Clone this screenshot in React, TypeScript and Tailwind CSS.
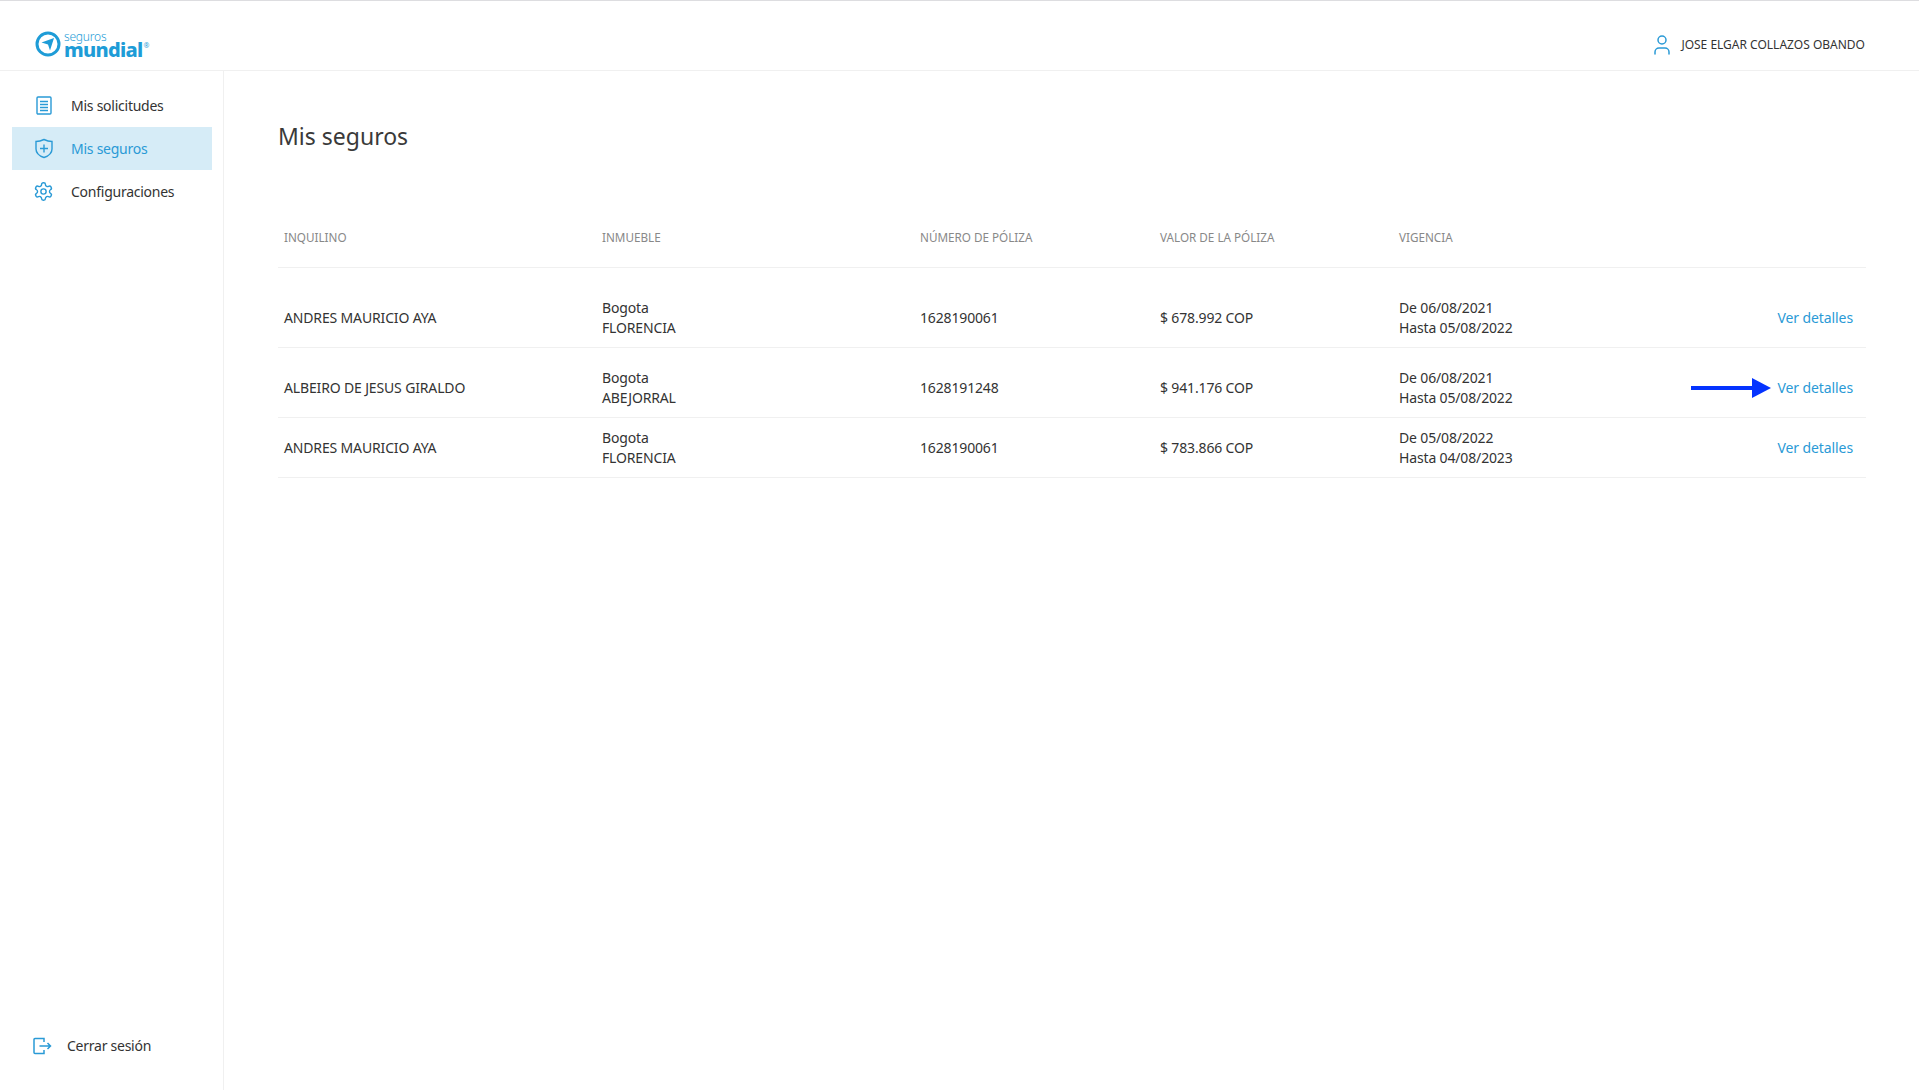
import { User } from 'lucide-react';

const rows = [
  { name: 'ANDRES MAURICIO AYA', city: 'FLORENCIA', poliza: '1628190061', valor: '$ 678.992 COP', desde: 'De 06/08/2021', hasta: 'Hasta 05/08/2022', cls: 'h-[60px] mt-5', arrow: false },
  { name: 'ALBEIRO DE JESUS GIRALDO', city: 'ABEJORRAL', poliza: '1628191248', valor: '$ 941.176 COP', desde: 'De 06/08/2021', hasta: 'Hasta 05/08/2022', cls: 'h-[70px] pt-[10px]', arrow: true },
  { name: 'ANDRES MAURICIO AYA', city: 'FLORENCIA', poliza: '1628190061', valor: '$ 783.866 COP', desde: 'De 05/08/2022', hasta: 'Hasta 04/08/2023', cls: 'h-[60px]', arrow: false },
];

function Logo() {
  return (
    <div className="flex items-center">
      <svg width="26" height="26" viewBox="0 0 26 26" className="shrink-0">
        <circle cx="13" cy="13" r="11" fill="none" stroke="#1e9cd7" strokeWidth="3" />
        <path d="M6.5 11.5 L19 7 L15 19.5 L13 13.5 Z" fill="#1e9cd7" />
      </svg>
      <div className="ml-[3px] flex flex-col text-[#1e9cd7]">
        <span className="text-[12px] leading-[11px] font-light tracking-[-0.2px]">seguros</span>
        <div className="flex items-start">
          <span className="text-[20px] leading-[16px] font-extrabold tracking-[-0.7px]">mundial</span>
          <span className="ml-[1px] text-[7px] leading-[8px]">®</span>
        </div>
      </div>
    </div>
  );
}

function NavItem({ label, active, icon }: { label: string; active?: boolean; icon: React.ReactNode }) {
  return (
    <div className={`flex items-center h-[43px] pl-[18px] ${active ? 'bg-[#d6ecf7] text-[#2a9ad6]' : 'text-[#333]'}`}>
      <span className="w-[27px] flex justify-center text-[#2a9ad6]">{icon}</span>
      <span className="ml-[14px] text-[14px] tracking-[-0.25px]">{label}</span>
    </div>
  );
}

export default function App() {
  return (
    <div className="h-[1090px] bg-white flex flex-col border-t border-[#dddde0] font-['Noto_Sans','Open_Sans',sans-serif] overflow-hidden">
      <header className="h-[70px] shrink-0 border-b border-[#f0f0f0] flex items-center justify-between pl-[35px] pr-[54px] pt-[17px]">
        <Logo />
        <div className="flex items-center pt-[2px]">
          <User size={24} strokeWidth={1.5} className="text-[#2a9ad6]" />
          <span className="ml-[7px] text-[12px] text-[#333]">JOSE ELGAR COLLAZOS OBANDO</span>
        </div>
      </header>
      <div className="flex flex-1">
        <aside className="w-[224px] shrink-0 border-r border-[#f0f0f0] flex flex-col justify-between pb-[34px] pt-[13px]">
          <nav className="ml-[12px] w-[200px]">
            <NavItem
              label="Mis solicitudes"
              icon={
                <svg width="18" height="19" viewBox="0 0 18 19" fill="none" stroke="currentColor" strokeWidth="1.4">
                  <rect x="2" y="1" width="14" height="17" rx="1" />
                  <path d="M5 5.5h8M5 8.5h8M5 11.5h8M5 14.5h8" />
                </svg>
              }
            />
            <NavItem
              active
              label="Mis seguros"
              icon={
                <svg width="20" height="21" viewBox="0 0 20 21" fill="none" stroke="currentColor" strokeWidth="1.4">
                  <path d="M10 1.5 C13 3 15 3.5 18 3.5 V11 C18 15 14.5 18 10 19.5 C5.5 18 2 15 2 11 V3.5 C5 3.5 7 3 10 1.5 Z" />
                  <path d="M10 6.5v8M6 10.5h8" />
                </svg>
              }
            />
            <NavItem
              label="Configuraciones"
              icon={
                <svg width="21" height="21" viewBox="0 0 24 24" fill="none" stroke="currentColor" strokeWidth="1.6" strokeLinecap="round" strokeLinejoin="round">
                  <path d="M12.22 2h-.44a2 2 0 0 0-2 2v.18a2 2 0 0 1-1 1.73l-.43.25a2 2 0 0 1-2 0l-.15-.08a2 2 0 0 0-2.73.73l-.22.38a2 2 0 0 0 .73 2.73l.15.1a2 2 0 0 1 1 1.72v.51a2 2 0 0 1-1 1.74l-.15.09a2 2 0 0 0-.73 2.73l.22.38a2 2 0 0 0 2.73.73l.15-.08a2 2 0 0 1 2 0l.43.25a2 2 0 0 1 1 1.73V20a2 2 0 0 0 2 2h.44a2 2 0 0 0 2-2v-.18a2 2 0 0 1 1-1.73l.43-.25a2 2 0 0 1 2 0l.15.08a2 2 0 0 0 2.73-.73l.22-.39a2 2 0 0 0-.73-2.73l-.15-.08a2 2 0 0 1-1-1.74v-.5a2 2 0 0 1 1-1.74l.15-.09a2 2 0 0 0 .73-2.73l-.22-.38a2 2 0 0 0-2.73-.73l-.15.08a2 2 0 0 1-2 0l-.43-.25a2 2 0 0 1-1-1.73V4a2 2 0 0 0-2-2z" />
                  <circle cx="12" cy="12" r="3" />
                </svg>
              }
            />
          </nav>
          <div className="flex items-center pl-[33px] text-[#333]">
            <svg width="19" height="18" viewBox="0 0 19 18" fill="none" stroke="#2a9ad6" strokeWidth="1.5">
              <path d="M11 5V1.5H2a1 1 0 0 0-1 1v13a1 1 0 0 0 1 1h9V13" />
              <path d="M6.5 9h11M14.5 6l3 3-3 3" />
            </svg>
            <span className="ml-[15px] text-[14px] tracking-[-0.25px]">Cerrar sesión</span>
          </div>
        </aside>
        <main className="flex-1 pl-[54px] pr-[53px]">
          <h1 className="mt-[49px] h-[33px] text-[23px] leading-[33px] text-[#3a3a3a]">Mis seguros</h1>
          <div className="mt-[64px] h-[51px] pb-[8px] border-b border-[#f0f0f0] px-[6px] grid grid-cols-[318px_318px_240px_239px_1fr] items-center text-[11.7px] text-[#888]">
            <span>INQUILINO</span>
            <span>INMUEBLE</span>
            <span>NÚMERO DE PÓLIZA</span>
            <span>VALOR DE LA PÓLIZA</span>
            <span>VIGENCIA</span>
          </div>
          {rows.map((r, i) => (
            <div key={i} className={`${r.cls} border-b border-[#f0f0f0] pl-[6px] pr-[13px] grid grid-cols-[318px_318px_240px_239px_1fr_auto] items-center text-[14px] leading-[20px] text-[#333] tracking-[-0.15px]`}>
              <span>{r.name}</span>
              <span className="flex flex-col"><span>Bogota</span><span>{r.city}</span></span>
              <span>{r.poliza}</span>
              <span>{r.valor}</span>
              <span className="flex flex-col"><span>{r.desde}</span><span>{r.hasta}</span></span>
              <span className="flex items-center text-[#2a9ad6] tracking-[-0.1px]">
                {r.arrow && (
                  <svg width="80" height="20" viewBox="0 0 80 20" className="mr-[7px]">
                    <rect x="0" y="8" width="62" height="4" fill="#0433ff" />
                    <path d="M61 0 L80 10 L61 20 Z" fill="#0433ff" />
                  </svg>
                )}
                Ver detalles
              </span>
            </div>
          ))}
        </main>
      </div>
    </div>
  );
}
